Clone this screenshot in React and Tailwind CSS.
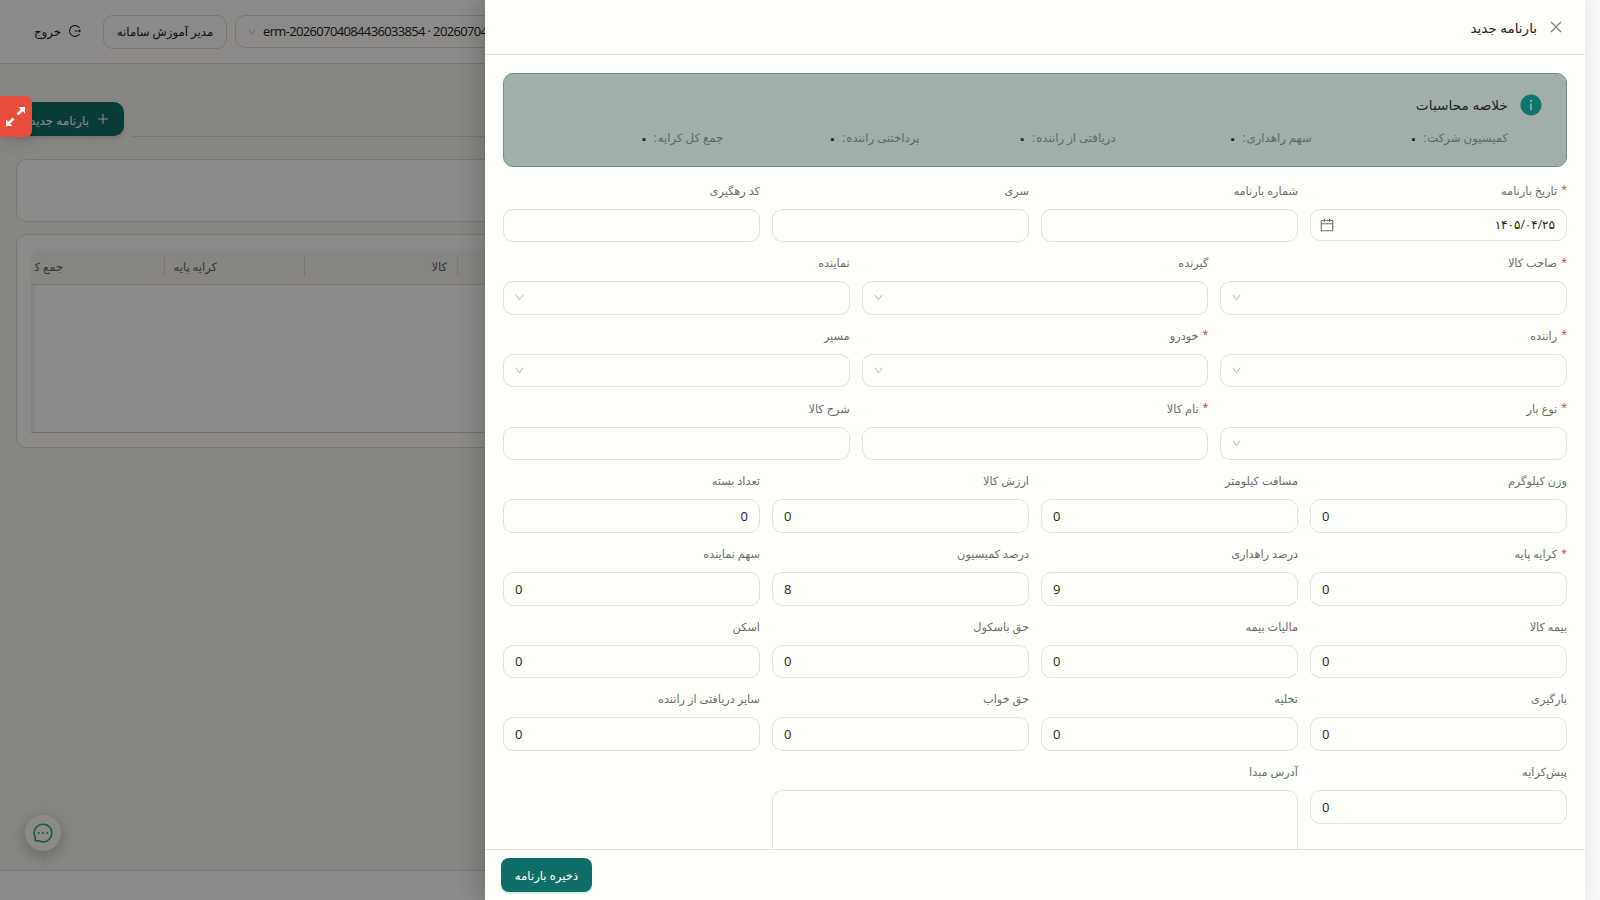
import {
  AiFillInfoCircle,
  AiOutlineCalendar,
  AiOutlineClose,
  AiOutlineDown,
  AiOutlineLogout,
  AiOutlineMessage,
  AiOutlinePlus,
} from "react-icons/ai";

const SUMMARY = [
  "کمیسیون شرکت",
  "سهم راهداری",
  "دریافتی از راننده",
  "پرداختنی راننده",
  "جمع کل کرایه",
];

const ROWS = [
  [
    { label: "تاریخ بارنامه", required: true, type: "date", value: "۱۴۰۵/۰۴/۲۵" },
    { label: "شماره بارنامه" },
    { label: "سری" },
    { label: "کد رهگیری" },
  ],
  [
    { label: "صاحب کالا", required: true, type: "select" },
    { label: "گیرنده", type: "select" },
    { label: "نماینده", type: "select" },
  ],
  [
    { label: "راننده", required: true, type: "select" },
    { label: "خودرو", required: true, type: "select" },
    { label: "مسیر", type: "select" },
  ],
  [
    { label: "نوع بار", required: true, type: "select" },
    { label: "نام کالا", required: true },
    { label: "شرح کالا" },
  ],
  [
    { label: "وزن کیلوگرم", type: "number", value: "0" },
    { label: "مسافت کیلومتر", type: "number", value: "0" },
    { label: "ارزش کالا", type: "number", value: "0" },
    { label: "تعداد بسته", value: "0" },
  ],
  [
    { label: "کرایه پایه", required: true, type: "number", value: "0" },
    { label: "درصد راهداری", type: "number", value: "9" },
    { label: "درصد کمیسیون", type: "number", value: "8" },
    { label: "سهم نماینده", type: "number", value: "0" },
  ],
  [
    { label: "بیمه کالا", type: "number", value: "0" },
    { label: "مالیات بیمه", type: "number", value: "0" },
    { label: "حق باسکول", type: "number", value: "0" },
    { label: "اسکن", type: "number", value: "0" },
  ],
  [
    { label: "بارگیری", type: "number", value: "0" },
    { label: "تخلیه", type: "number", value: "0" },
    { label: "حق خواب", type: "number", value: "0" },
    { label: "سایر دریافتی از راننده", type: "number", value: "0" },
  ],
  [
    { label: "پیش‌کرایه", type: "number", value: "0" },
    { label: "آدرس مبدا", type: "textarea" },
  ],
];

const BOX = "flex items-center w-full border border-[#e4e0db] rounded-[10px] px-[11px]";

function Control({ type, value }) {
  if (type === "date") {
    return (
      <div className={`${BOX} h-8 mt-px justify-between`}>
        <span className="text-[12px] text-[#1c2422]">{value}</span>
        <AiOutlineCalendar size={16} className="text-[#6d7673] -ml-[3px]" />
      </div>
    );
  }
  if (type === "select") {
    return (
      <div className={`${BOX} h-[33.4px] justify-end`}>
        <AiOutlineDown size={11} className="text-[#b9b9b6] -ml-px" />
      </div>
    );
  }
  if (type === "textarea") {
    return <div className={`${BOX} h-[88px]`} />;
  }
  return (
    <div className={`${BOX} h-[33.7px] ${type === "number" ? "justify-end" : ""}`}>
      <span className="pt-px text-[13px] text-[#1c2422]">{value}</span>
    </div>
  );
}

function Field({ label, required, type, value }) {
  return (
    <div className={type === "textarea" ? "col-span-2" : ""}>
      <div className="h-[22px] mb-[7.5px] pt-[2px] flex items-center gap-[4px] text-[11.3px] text-[#66706d] whitespace-nowrap">
        {required && <span className="h-[18px] text-[10.5px] text-[#b5443c]">*</span>}
        {label}
      </div>
      <Control type={type} value={value} />
    </div>
  );
}

function Backdrop() {
  return (
    <div className="w-full h-full flex flex-col bg-[#f5f4ee] bg-[linear-gradient(to_right,rgba(60,70,60,0.03)_1px,transparent_1px),linear-gradient(to_bottom,rgba(60,70,60,0.03)_1px,transparent_1px)] bg-[size:44px_44px]">
      {/* Top bar */}
      <header dir="ltr" className="h-16 shrink-0 flex items-start pt-[15px] bg-[#fefbf8] border-b border-[#dcd8cf] text-[11.7px] text-[#1c2422]">
        <div dir="rtl" className="h-8 w-[48px] ml-[34px] flex items-center justify-between shrink-0">
          <AiOutlineLogout size={14} />
          <span className="pt-px text-[11.7px]">خروج</span>
        </div>
        <div dir="rtl" className="h-[34px] w-[124px] ml-[21px] flex items-center justify-center shrink-0 border border-[#dcd8cf] rounded-[10px]">
          مدیر آموزش سامانه
        </div>
        <div className="h-[33px] flex-1 ml-2 flex items-center border border-[#dcd8cf] rounded-[10px] pl-[11px] gap-[6px] whitespace-nowrap overflow-hidden">
          <AiOutlineDown size={10} className="text-[#b9b9b6] shrink-0" />
          <span className="pt-px text-[13px] tracking-[-0.65px]">erm-20260704084436033854 · 20260704</span>
        </div>
      </header>

      {/* Title row */}
      <div dir="ltr" className="h-[95px] shrink-0 pt-[38px] pl-4 flex items-start gap-2">
        <div dir="rtl" className="w-[108px] h-[34px] px-[14px] flex items-center gap-[7px] shrink-0 rounded-[10px] bg-[#0f6f67] text-[12px] text-white whitespace-nowrap shadow-md">
          <AiOutlinePlus size={14} className="shrink-0" />
          <span className="pt-[3px]">بارنامه جدید</span>
        </div>
        <div className="flex-1 h-[35px] border-b border-[#dcd8cf]" />
      </div>

      <div className="ml-4 h-[63px] shrink-0 bg-[#fefbf8] border border-[#dcd8cf] rounded-[10px]" />

      {/* Table card */}
      <div dir="ltr" className="ml-4 mt-3 h-[214px] shrink-0 p-[14px] bg-[#fefbf8] border border-[#dcd8cf] rounded-[10px]">
        <div className="h-[184px] border-b border-[#cfcbc3] rounded-tl-[10px] shadow-[inset_6px_0_6px_-6px_rgba(0,0,0,0.15)]">
          <div className="h-9 flex items-center bg-[#f5f2ec] border-b border-[#dcd8cf] rounded-tl-[10px] text-[11.5px] text-[#5f6866]">
            <div dir="rtl" className="w-[134px] h-5 pt-px flex items-center border-r border-[#dcd8cf] pr-[101px] whitespace-nowrap">
              {"جمع ک\u200d"}
            </div>
            <div dir="rtl" className="w-[140px] h-5 pt-px flex items-center border-r border-[#dcd8cf] pr-[87px] whitespace-nowrap">
              کرایه پایه
            </div>
            <div dir="rtl" className="w-[153px] h-5 pt-px flex items-center border-r border-[#dcd8cf] pr-[10px]">
              کالا
            </div>
          </div>
        </div>
      </div>

      <div className="mt-auto h-[30px] bg-[#fefbf8] border-t border-[#dcd8cf]" />
    </div>
  );
}

function Drawer() {
  return (
    <aside className="w-[1100px] h-full flex flex-col bg-[#fffffc] shadow-[-6px_0_20px_rgba(0,0,0,0.18)]">
      <div className="h-[55px] shrink-0 flex items-center gap-[11px] pr-[21px] border-b border-[#e4e2de]">
        <AiOutlineClose size={16} className="text-[#808583]" />
        <h2 className="pt-[2px] text-[13.5px] text-[#1c2422]">بارنامه جدید</h2>
      </div>

      <div className="flex-1 min-h-0 overflow-hidden px-[18px] pt-[18px]">
        {/* Totals */}
        <div className="h-[94px] flex gap-[11px] px-[23px] pt-[19px] bg-[#a1afab] border border-[#649389] rounded-[10px]">
          <AiFillInfoCircle size={24} className="text-[#0f766e] shrink-0" />
          <div className="flex-1">
            <p className="h-6 pt-px flex items-center text-[13.7px] text-[#1c2422]">خلاصه محاسبات</p>
            <div className="grid grid-cols-5 mt-[10px]">
              {SUMMARY.map((label) => (
                <div key={label} className="h-5 pt-px flex items-center gap-[5px] text-[11.7px] whitespace-nowrap">
                  <span className="flex gap-px text-[#5f6b68]">
                    {label}
                    <span>:</span>
                  </span>
                  <span className="text-[16px] font-bold leading-5 text-[#1c2422]">۰</span>
                </div>
              ))}
            </div>
          </div>
        </div>

        <form className="mt-3">
          {ROWS.map((row, i) => (
            <div
              key={i}
              className={`grid gap-x-3 h-[72.71px] ${row.length === 3 ? "grid-cols-3" : "grid-cols-4"}`}
            >
              {row.map((field) => (
                <Field key={field.label} {...field} />
              ))}
            </div>
          ))}
        </form>
      </div>

      <div className="h-[51px] shrink-0 flex justify-end pl-4 pt-2 border-t border-[#e4e2de]">
        <button
          type="button"
          className="w-[91px] h-[34px] pt-[2px] rounded-[8px] bg-[#0f6f67] text-[11.7px] text-white whitespace-nowrap shadow-[0_2px_0_#d5f3ee]"
        >
          ذخیره بارنامه
        </button>
      </div>
    </aside>
  );
}

export default function App() {
  return (
    <div
      dir="rtl"
      className="relative w-[1600px] h-[900px] overflow-hidden bg-[#f8f8f6] font-['Open_Sans','DejaVu_Sans',sans-serif]"
    >
      <div className="w-[1585px] h-full mr-[15px]">
        <Backdrop />
      </div>

      {/* Support chat bubble */}
      <div className="absolute left-[25px] top-[815px] w-[36px] h-[36px] rounded-full bg-[#fefbf8] flex items-center justify-center shadow-[0_4px_16px_rgba(0,0,0,0.25)]">
        <AiOutlineMessage size={22} className="text-[#2fa866]" />
      </div>

      {/* Mask + drawer */}
      <div className="absolute inset-y-0 left-0 w-[1585px] bg-black/45 flex">
        <Drawer />
      </div>

      {/* Fullscreen toggle */}
      <div className="absolute left-0 top-24 w-8 h-[41px] rounded-r-md bg-[#e94e3d] flex items-center pl-[5px] shadow-lg" dir="ltr">
        <svg width="21" height="21" viewBox="0 0 21 21" fill="#fff" stroke="#fff">
          <path d="M13.5 1H20v6.5z" stroke="none" />
          <path d="M1 13.5V20h6.5z" stroke="none" />
          <path d="M12.5 8.5l4.5-4.5M8.5 12.5L4 17" strokeWidth="2.6" />
        </svg>
      </div>
    </div>
  );
}
